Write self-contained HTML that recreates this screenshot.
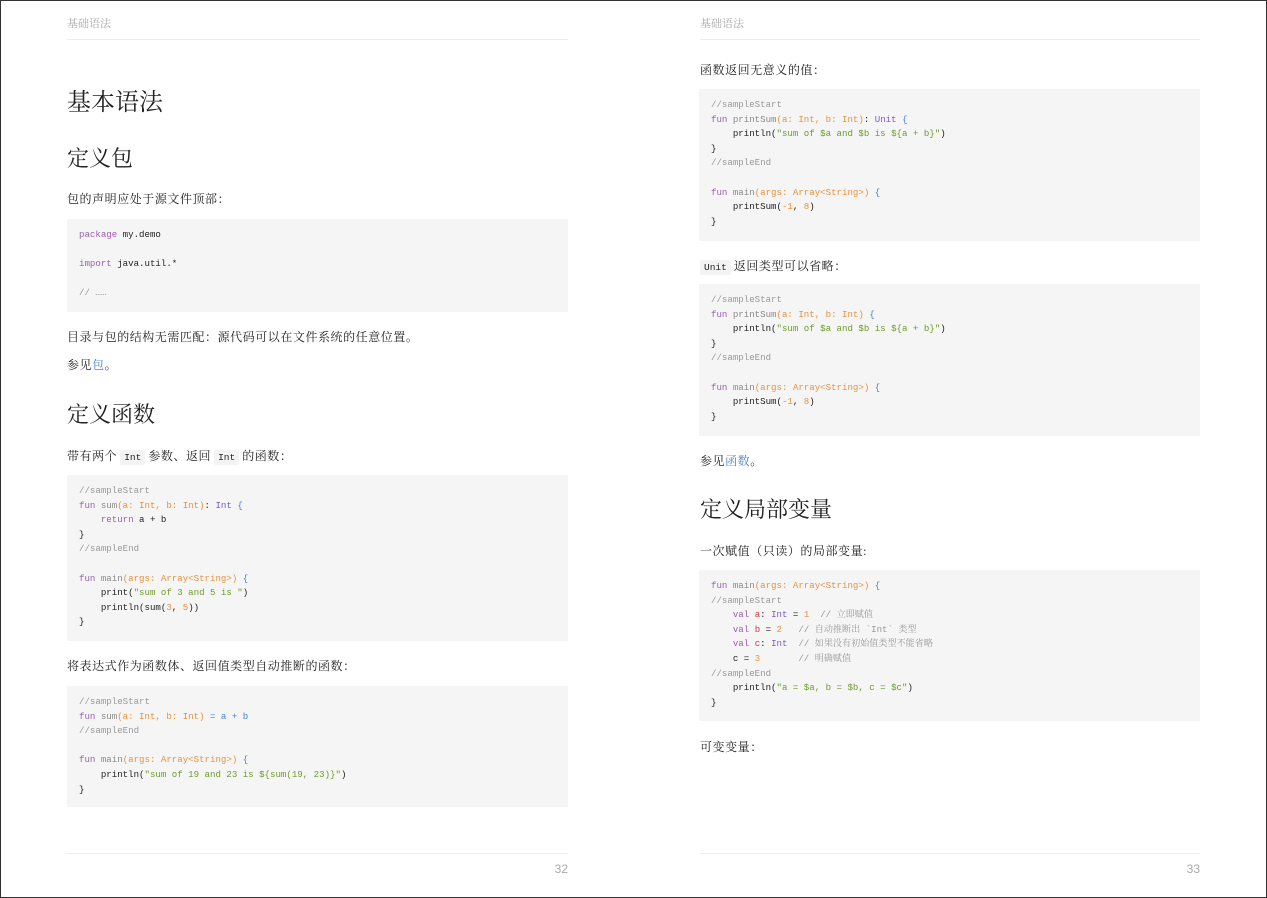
<!DOCTYPE html>
<html><head><meta charset="utf-8">
<style>
*{margin:0;padding:0;box-sizing:border-box}
html,body{width:1267px;height:898px;overflow:hidden;background:#fff}
body{position:relative;box-shadow:inset 0 0 0 1px #333;font-family:"Liberation Serif","Noto Serif CJK SC",serif;color:#222}
.a{position:absolute;white-space:nowrap}
.hd{font-size:11px;color:#aaa;line-height:14px;top:17px!important}
.hr{position:absolute;height:1px;background:#eee}
.pn{font-family:"Liberation Sans",sans-serif;font-size:12px;color:#aaa;line-height:14px}
.p{font-size:12px;line-height:16px;letter-spacing:0.55px;transform:translateY(1px)}
.h1{font-size:24px;line-height:30px;transform:translateY(1px)}
.h2{font-size:22px;line-height:26px;transform:translateY(1px)}
.ic{font-family:"Liberation Mono",monospace;font-size:9.5px;background:#f3f3f3;padding:2px 4px;border-radius:2px;margin:0 3px;letter-spacing:0}
.cb{position:absolute;background:#f5f5f5;padding:9px 12px;font-family:"Liberation Mono","Noto Serif CJK SC",monospace;font-size:9.1px;line-height:14.6px;white-space:pre;color:#222}
.k{color:#9a5fb0}.f{color:#8a8a8a}.q{color:#e6923e}.t{color:#7b5cc4}.b{color:#4b7fd0}.s{color:#6f9c2a}.c{color:#999}.r{color:#c23a4b}
a{color:#4b7fd0;text-decoration:none}
</style></head><body>
<div class="a hd" style="left:67px;top:16px">基础语法</div>
<div class="hr" style="left:67px;top:39px;width:501px"></div>
<div class="a h1" style="left:67px;top:87px">基本语法</div>
<div class="a h2" style="left:67px;top:145px">定义包</div>
<div class="a p" style="left:67px;top:190px">包的声明应处于源文件顶部：</div>
<div class="cb" style="left:67px;top:219px;width:501px;height:93px"><span class="k">package</span> my.demo

<span class="k">import</span> java.util.*

<span class="c">// ……</span></div>
<div class="a p" style="left:67px;top:328px">目录与包的结构无需匹配：源代码可以在文件系统的任意位置。</div>
<div class="a p" style="left:67px;top:356px">参见<a>包</a>。</div>
<div class="a h2" style="left:67px;top:401px">定义函数</div>
<div class="a p" style="left:67px;top:447px">带有两个<span class="ic">Int</span>参数、返回<span class="ic">Int</span>的函数：</div>
<div class="cb" style="left:67px;top:475px;width:501px;height:166px"><span class="c">//sampleStart</span>
<span class="k">fun</span> <span class="f">sum</span><span class="q">(a: Int, b: Int)</span>: <span class="t">Int</span> <span class="b">{</span>
    <span class="k">return</span> a + b
}
<span class="c">//sampleEnd</span>

<span class="k">fun</span> <span class="f">main</span><span class="q">(args: Array&lt;String&gt;)</span> <span class="b">{</span>
    print(<span class="s">"sum of 3 and 5 is "</span>)
    println(sum(<span class="q">3</span>, <span class="q">5</span>))
}</div>
<div class="a p" style="left:67px;top:657px">将表达式作为函数体、返回值类型自动推断的函数：</div>
<div class="cb" style="left:67px;top:686px;width:501px;height:121px"><span class="c">//sampleStart</span>
<span class="k">fun</span> <span class="f">sum</span><span class="q">(a: Int, b: Int)</span> <span class="b">= a + b</span>
<span class="c">//sampleEnd</span>

<span class="k">fun</span> <span class="f">main</span><span class="q">(args: Array&lt;String&gt;)</span> <span class="b">{</span>
    println(<span class="s">"sum of 19 and 23 is ${sum(19, 23)}"</span>)
}</div>
<div class="hr" style="left:67px;top:853px;width:501px"></div>
<div class="a pn" style="left:540px;top:862px;width:28px;text-align:right">32</div>

<div class="a hd" style="left:700px;top:16px">基础语法</div>
<div class="hr" style="left:700px;top:39px;width:500px"></div>
<div class="a p" style="left:700px;top:61px">函数返回无意义的值：</div>
<div class="cb" style="left:699px;top:89px;width:501px;height:152px"><span class="c">//sampleStart</span>
<span class="k">fun</span> <span class="f">printSum</span><span class="q">(a: Int, b: Int)</span>: <span class="t">Unit</span> <span class="b">{</span>
    println(<span class="s">"sum of $a and $b is ${a + b}"</span>)
}
<span class="c">//sampleEnd</span>

<span class="k">fun</span> <span class="f">main</span><span class="q">(args: Array&lt;String&gt;)</span> <span class="b">{</span>
    printSum(<span class="q">-1</span>, <span class="q">8</span>)
}</div>
<div class="a p" style="left:700px;top:257px"><span class="ic" style="margin-left:0">Unit</span>返回类型可以省略：</div>
<div class="cb" style="left:699px;top:284px;width:501px;height:152px"><span class="c">//sampleStart</span>
<span class="k">fun</span> <span class="f">printSum</span><span class="q">(a: Int, b: Int)</span> <span class="b">{</span>
    println(<span class="s">"sum of $a and $b is ${a + b}"</span>)
}
<span class="c">//sampleEnd</span>

<span class="k">fun</span> <span class="f">main</span><span class="q">(args: Array&lt;String&gt;)</span> <span class="b">{</span>
    printSum(<span class="q">-1</span>, <span class="q">8</span>)
}</div>
<div class="a p" style="left:700px;top:452px">参见<a>函数</a>。</div>
<div class="a h2" style="left:700px;top:496px">定义局部变量</div>
<div class="a p" style="left:700px;top:542px">一次赋值（只读）的局部变量:</div>
<div class="cb" style="left:699px;top:570px;width:501px;height:151px"><span class="k">fun</span> <span class="f">main</span><span class="q">(args: Array&lt;String&gt;)</span> <span class="b">{</span>
<span class="c">//sampleStart</span>
    <span class="k">val</span> <span class="r">a</span>: <span class="t">Int</span> = <span class="q">1</span>  <span class="c">// 立即赋值</span>
    <span class="k">val</span> <span class="r">b</span> = <span class="q">2</span>   <span class="c">// 自动推断出 `Int` 类型</span>
    <span class="k">val</span> <span class="r">c</span>: <span class="t">Int</span>  <span class="c">// 如果没有初始值类型不能省略</span>
    c = <span class="q">3</span>       <span class="c">// 明确赋值</span>
<span class="c">//sampleEnd</span>
    println(<span class="s">"a = $a, b = $b, c = $c"</span>)
}</div>
<div class="a p" style="left:700px;top:738px">可变变量：</div>
<div class="hr" style="left:700px;top:853px;width:500px"></div>
<div class="a pn" style="left:1172px;top:862px;width:28px;text-align:right">33</div>
</body></html>
